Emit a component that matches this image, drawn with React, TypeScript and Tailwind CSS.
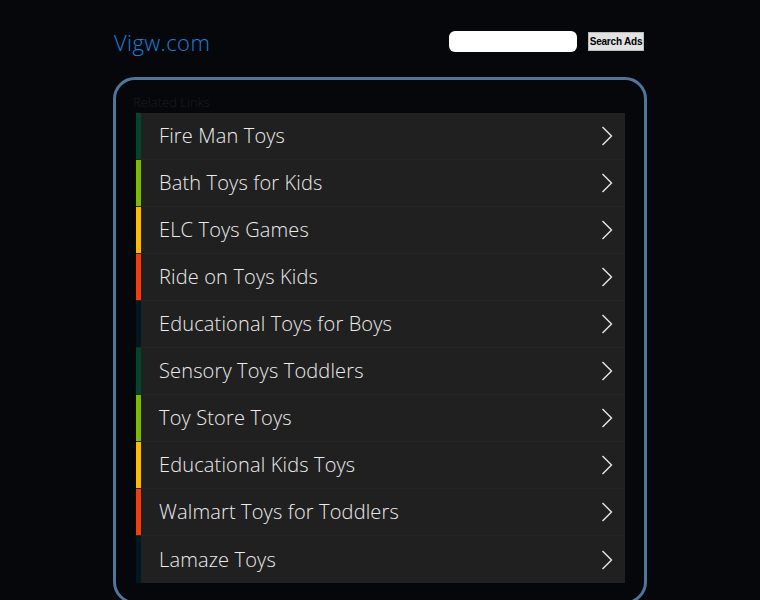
import React from 'react';

const links = [
  { label: 'Fire Man Toys', stripe: 'bg-[#02452a]' },
  { label: 'Bath Toys for Kids', stripe: 'bg-[#7cbb00]' },
  { label: 'ELC Toys Games', stripe: 'bg-[#ffbb00]' },
  { label: 'Ride on Toys Kids', stripe: 'bg-[#f63c0c]' },
  { label: 'Educational Toys for Boys', stripe: 'bg-[#021820]' },
  { label: 'Sensory Toys Toddlers', stripe: 'bg-[#02452a]' },
  { label: 'Toy Store Toys', stripe: 'bg-[#7cbb00]' },
  { label: 'Educational Kids Toys', stripe: 'bg-[#ffbb00]' },
  { label: 'Walmart Toys for Toddlers', stripe: 'bg-[#f63c0c]' },
  { label: 'Lamaze Toys', stripe: 'bg-[#021820]' },
];

function Chevron() {
  return (
    <svg width="12" height="22" viewBox="0 0 12 22" fill="none">
      <path d="M1.5 2 L10.5 11 L1.5 20" stroke="#e8e8e8" strokeWidth="1.4" />
    </svg>
  );
}

export default function App() {
  return (
    <div className="min-h-[600px] bg-[#05070b] font-['Open_Sans',sans-serif]">
      <div className="w-[534px] ml-[113px]">
        {/* Header */}
        <div className="flex items-center justify-between h-[83px] pt-[6px] pb-[6px]">
          <div className="text-[22px] font-[350] text-[#1b7fd8] leading-none pl-px tracking-[0.4px]">Vigw.com</div>
          <div className="flex items-center mr-[3px]">
            <div className="w-[128px] h-[21px] bg-white rounded-[6px]" />
            <button className="ml-[11px] w-[56px] h-[19px] bg-[#e2e2e2] border border-[#bcbcbc] font-['Liberation_Sans',sans-serif] text-[10px] font-bold text-black leading-none whitespace-nowrap tracking-[-0.2px]">
              Search Ads
            </button>
          </div>
        </div>

        {/* Panel */}
        <div className="border-[3px] border-[#4f759a] rounded-[22px] pt-[16px] pl-[20px] pr-[19px] pb-[18px] -mt-[6px]">
          <div className="text-[13px] font-light text-[#1c1e22] leading-none h-[17px] -ml-[3px]">Related Links</div>
          <div className="flex flex-col">
            {links.map((link) => (
              <a
                key={link.label}
                href="#"
                className="flex h-[47px] bg-[#202020] border-b border-[#252525] last:border-b-0"
              >
                <div className={`w-[5px] ${link.stripe}`} />
                <div className="flex-1 flex items-center justify-between pl-[18px] pr-[12px]">
                  <span className="text-[20px] font-[350] text-[#ececec] tracking-[0.15px]">{link.label}</span>
                  <Chevron />
                </div>
              </a>
            ))}
          </div>
        </div>
      </div>
    </div>
  );
}
